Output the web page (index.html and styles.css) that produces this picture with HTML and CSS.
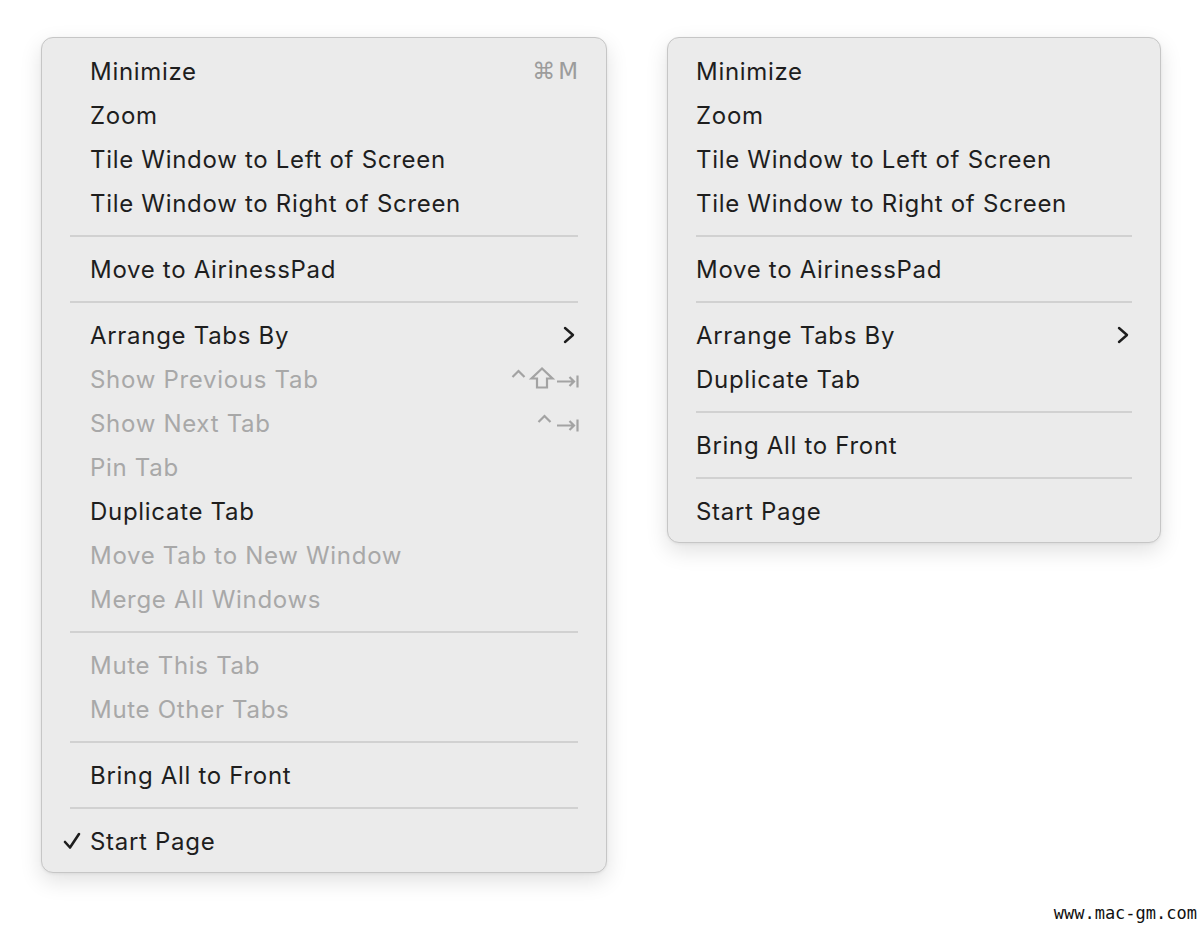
FILE: index.html
```html
<!DOCTYPE html>
<html>
	<head>
		<meta charset="UTF-8">
		<title>Window menu</title>
		<link rel="stylesheet" href="styles.css">
	</head>
	<body>
		<div class="stage">
			<!-- long window menu, with check column -->
			<div class="menu menu-left">
				<div class="item"><span class="label">Minimize</span><span class="keys">⌘M</span></div>
				<div class="item"><span class="label">Zoom</span></div>
				<div class="item"><span class="label">Tile Window to Left of Screen</span></div>
				<div class="item"><span class="label">Tile Window to Right of Screen</span></div>
				<div class="sep"></div>
				<div class="item"><span class="label">Move to AirinessPad</span></div>
				<div class="sep"></div>
				<div class="item">
					<span class="label">Arrange Tabs By</span>
					<svg class="chev" width="12" height="18" viewBox="0 0 12 18"><path d="M2 2 L10 9 L2 16" fill="none" stroke="#1d1d1d" stroke-width="2.4" stroke-linecap="round" stroke-linejoin="round"/></svg>
				</div>
				<div class="item off">
					<span class="label">Show Previous Tab</span>
					<!-- control shift tab -->
					<svg class="glyphs" width="68" height="24" viewBox="0 0 68 24">
						<path d="M1.5 10 L7.5 4 L13.5 10" />
						<path d="M31 1.5 L20.5 11.5 L26 11.5 L26 20.5 L36 20.5 L36 11.5 L41.5 11.5 Z" />
						<path d="M46 14.5 L63 14.5 M58.5 10 L63 14.5 L58.5 19 M66.5 8.5 L66.5 20.5" />
					</svg>
				</div>
				<div class="item off">
					<span class="label">Show Next Tab</span>
					<svg class="glyphs" width="42" height="24" viewBox="0 0 42 24">
						<path d="M1.5 11 L7.5 5 L13.5 11" />
						<path d="M20 14.5 L37 14.5 M32.5 10 L37 14.5 L32.5 19 M40.5 8.5 L40.5 20.5" />
					</svg>
				</div>
				<div class="item off"><span class="label">Pin Tab</span></div>
				<div class="item"><span class="label">Duplicate Tab</span></div>
				<div class="item off"><span class="label">Move Tab to New Window</span></div>
				<div class="item off"><span class="label">Merge All Windows</span></div>
				<div class="sep"></div>
				<div class="item off"><span class="label">Mute This Tab</span></div>
				<div class="item off"><span class="label">Mute Other Tabs</span></div>
				<div class="sep"></div>
				<div class="item"><span class="label">Bring All to Front</span></div>
				<div class="sep"></div>
				<div class="item">
					<svg class="check" width="18" height="18" viewBox="0 0 18 18"><path d="M2 10 L7 15.5 L16 2" fill="none" stroke="#1d1d1d" stroke-width="2.6" stroke-linecap="round" stroke-linejoin="round"/></svg>
					<span class="label">Start Page</span>
				</div>
			</div>

			<!-- short window menu -->
			<div class="menu menu-right">
				<div class="item"><span class="label">Minimize</span></div>
				<div class="item"><span class="label">Zoom</span></div>
				<div class="item"><span class="label">Tile Window to Left of Screen</span></div>
				<div class="item"><span class="label">Tile Window to Right of Screen</span></div>
				<div class="sep"></div>
				<div class="item"><span class="label">Move to AirinessPad</span></div>
				<div class="sep"></div>
				<div class="item">
					<span class="label">Arrange Tabs By</span>
					<svg class="chev" width="12" height="18" viewBox="0 0 12 18"><path d="M2 2 L10 9 L2 16" fill="none" stroke="#1d1d1d" stroke-width="2.4" stroke-linecap="round" stroke-linejoin="round"/></svg>
				</div>
				<div class="item"><span class="label">Duplicate Tab</span></div>
				<div class="sep"></div>
				<div class="item"><span class="label">Bring All to Front</span></div>
				<div class="sep"></div>
				<div class="item"><span class="label">Start Page</span></div>
			</div>
		</div>
		<div class="mark">www.mac-gm.com</div>
	</body>
</html>
```

FILE: styles.css
```css
body {
	margin: 0;
	padding: 0;
	background: #fff;
	width: 1200px;
	height: 926px;
	position: relative;
	overflow: hidden;
	font-family: Inter, "Noto Sans", sans-serif;
}

.stage {
	display: flex;
	align-items: flex-start;
	gap: 60px;
	padding: 37px 0 0 41px;
}

.menu {
	box-sizing: border-box;
	background: #ebebeb;
	border: 1px solid #c6c6c6;
	border-radius: 12px;
	padding: 11px 28px 9px 28px;
	box-shadow: 0 8px 22px rgba(0, 0, 0, 0.12), 0 1px 3px rgba(0, 0, 0, 0.06);
}

.menu-left {
	width: 566px;
}

.menu-left .item {
	padding-left: 20px;
}

.menu-right {
	width: 494px;
}

.item {
	position: relative;
	display: flex;
	align-items: center;
	height: 44px;
	font-size: 24px;
	color: #1e1e1e;
	letter-spacing: 0.7px;
}

.item.off {
	color: #a8a8a8;
}

.label {
	flex: 1;
	white-space: nowrap;
}

.keys {
	color: #9c9c9c;
	font-family: "DejaVu Sans", sans-serif;
	font-size: 23px;
	letter-spacing: 3px;
	margin-right: -3px;
}

.glyphs {
	margin-right: -1px;
}

.glyphs path {
	fill: none;
	stroke: #a3a3a3;
	stroke-width: 2.2;
	stroke-linejoin: miter;
}

.chev {
	margin-right: 3px;
}

.check {
	position: absolute;
	left: -7px;
	top: 13px;
}

.sep {
	height: 2px;
	margin: 10px 0;
	background: #d1d1d1;
}

.mark {
	position: absolute;
	right: 3px;
	bottom: 3px;
	font-family: "DejaVu Sans Mono", monospace;
	font-size: 17px;
	color: #111;
}
```
